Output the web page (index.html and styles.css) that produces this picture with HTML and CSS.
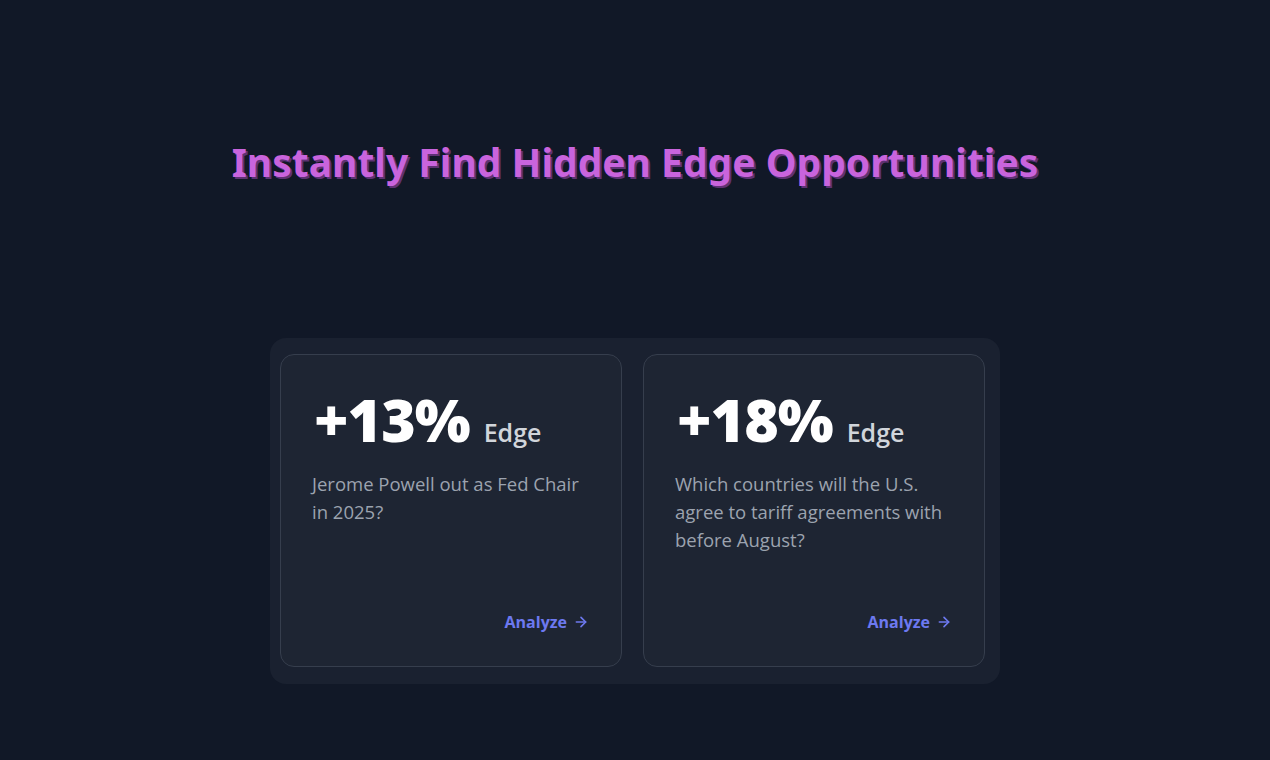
FILE: index.html
```html
<!DOCTYPE html>
<html lang="en">
<head>
  <meta charset="UTF-8">
  <meta name="viewport" content="width=device-width, initial-scale=1.0">
  <title>Edge Opportunities</title>
  <link rel="stylesheet" href="styles.css">
</head>
<body>
  <section class="hero">
    <h1 class="hero-title">Instantly Find Hidden Edge Opportunities</h1>

    <div class="edge-panel">
      <div class="edge-card">
        <div class="edge-head">
          <span class="edge-value">+13%</span>
          <span class="edge-label">Edge</span>
        </div>
        <p class="edge-question">Jerome Powell out as Fed Chair in 2025?</p>
        <a class="edge-link" href="#">Analyze
          <svg width="16" height="16" viewBox="0 0 24 24" fill="none" stroke="currentColor" stroke-width="2.4" stroke-linecap="round" stroke-linejoin="round"><path d="M5 12h14"/><path d="M12 5l7 7-7 7"/></svg>
        </a>
      </div>

      <div class="edge-card">
        <div class="edge-head">
          <span class="edge-value">+18%</span>
          <span class="edge-label">Edge</span>
        </div>
        <p class="edge-question">Which countries will the U.S. agree to tariff agreements with before August?</p>
        <a class="edge-link" href="#">Analyze
          <svg width="16" height="16" viewBox="0 0 24 24" fill="none" stroke="currentColor" stroke-width="2.4" stroke-linecap="round" stroke-linejoin="round"><path d="M5 12h14"/><path d="M12 5l7 7-7 7"/></svg>
        </a>
      </div>
    </div>
  </section>
</body>
</html>
```

FILE: styles.css
```css
body {
  margin: 0;
  padding: 0;
  background-color: #111827;
  font-family: "Open Sans", "Noto Sans", sans-serif;
  height: 760px;
  overflow: hidden;
}

.hero {
  display: flex;
  flex-direction: column;
  align-items: center;
  padding-top: 136px;
}

.hero-title {
  margin: 0;
  font-family: "Noto Sans", sans-serif;
  font-size: 39px;
  font-weight: 700;
  line-height: 52px;
  color: #c964dd;
  text-shadow: 2px 2px 0 #5e3274;
}

.edge-panel {
  margin-top: 150px;
  display: flex;
  gap: 21px;
  padding: 16px 15px 17px 10px;
  background-color: #1a2130;
  border-radius: 16px;
}

.edge-card {
  width: 342px;
  height: 313px;
  box-sizing: border-box;
  padding: 29px 37px 33px 31px;
  background-color: #1e2533;
  border: 1px solid #363e4d;
  border-radius: 14px;
  display: flex;
  flex-direction: column;
}

.edge-head {
  display: flex;
  align-items: baseline;
  gap: 14px;
  height: 70px;
}

.edge-value {
  font-size: 59px;
  font-weight: 800;
  color: #ffffff;
  line-height: 70px;
  letter-spacing: -1px;
  margin-left: 2px;
}

.edge-label {
  font-size: 25px;
  font-weight: 600;
  color: #d1d5db;
}

.edge-question {
  margin: 16px 0 0;
  font-size: 18.5px;
  line-height: 28px;
  color: #9ca3af;
  flex: 1;
}

.edge-link {
  align-self: flex-end;
  display: flex;
  align-items: center;
  gap: 6px;
  margin-right: -5px;
  font-size: 16px;
  font-weight: 700;
  color: #6d79f0;
  text-decoration: none;
}
```
